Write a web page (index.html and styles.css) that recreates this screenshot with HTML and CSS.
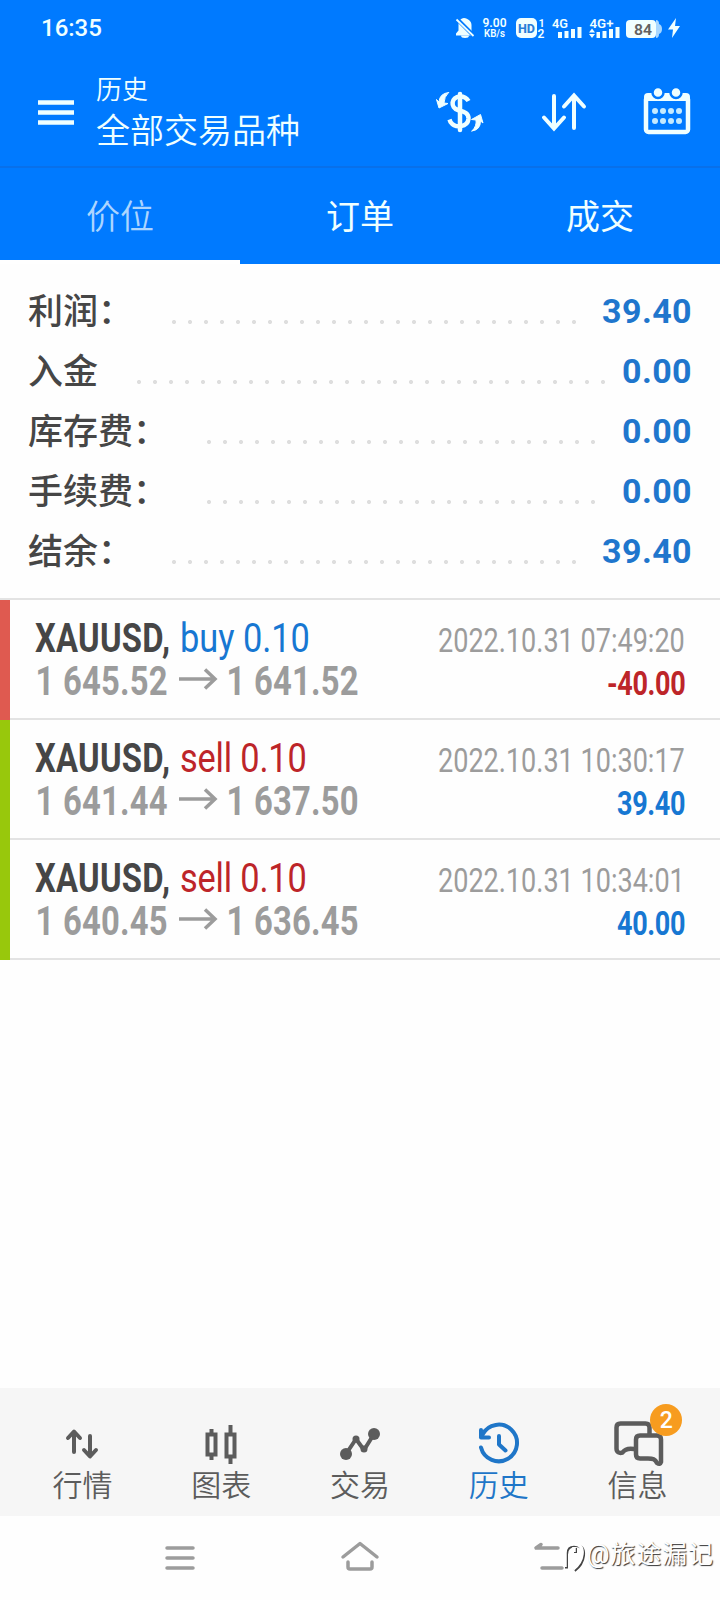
FILE: index.html
```html
<!DOCTYPE html>
<html lang="zh-CN">
<head>
<meta charset="utf-8">
<title>历史</title>
<link rel="stylesheet" href="styles.css">
</head>
<body>
<div class="app">
  <header class="header">
    <div class="statusbar">
      <span class="clock">16:35</span>
      <svg class="status-icons" width="236" height="30" viewBox="452 12 236 30">
        <g fill="#f0ffff">
          <path d="M456 35.500v-2l2.500-3v-6c0-3.500 2-6 5.500-6.500 4 .5 7.500 3 7.500 7v6l1.500 3v1.500z"/>
          <path d="M461 35.500h8a4 2.500 0 0 1-8 0z"/>
          <path d="M456 18l18 18" stroke="#007aff" stroke-width="4"/>
          <path d="M456.500 19.500l17 16.500" stroke="#f0ffff" stroke-width="1.800"/>
          <rect x="516" y="18" width="21" height="20" rx="5"/>
          <path d="M558 32h4v6h-4zM564.500 31h4v7h-4zM571 29h4v9h-4zM577.500 27h4v11h-4z"/>
          <path d="M589 32.500l3-4 3 4zM589 34l3 4 3-4zM596.500 32h3.500v6h-3.500zM602.500 31h4v7h-4zM609 29h4v9h-4zM615.500 27h4v11h-4z"/>
          <rect x="626" y="20" width="30" height="18" rx="4"/>
          <path d="M656 20q3 0 3 4 3 1 3 5t-3 5q0 4-3 4z" opacity=".7"/>
          <path d="M676 18l-8 11.500h5l-1 8.500 8-12h-5z"/>
        </g>
        <g font-family="Roboto, sans-serif" font-weight="600" fill="#f0ffff">
          <text x="482.500" y="27" font-size="12" textLength="24" lengthAdjust="spacingAndGlyphs">9.00</text>
          <text x="484" y="37" font-size="10" textLength="21" lengthAdjust="spacingAndGlyphs">KB/s</text>
          <text x="518" y="33" font-size="13" textLength="17" lengthAdjust="spacingAndGlyphs" fill="#2a7fd8" font-weight="800">HD</text>
          <text x="538.500" y="26.500" font-size="11">1</text>
          <text x="537.500" y="38" font-size="12">2</text>
          <text x="552" y="27.500" font-size="13" textLength="16" lengthAdjust="spacingAndGlyphs">4G</text>
          <text x="589.500" y="27.500" font-size="13" textLength="24" lengthAdjust="spacingAndGlyphs">4G+</text>
          <text x="634" y="34.500" font-size="15.500" textLength="18" lengthAdjust="spacingAndGlyphs" fill="#626262">84</text>
        </g>
      </svg>
    </div>
    <div class="toolbar">
      <svg class="menu" width="36" height="26" viewBox="0 0 36 26"><path d="M0 2.500h36M0 12.500h36M0 22.500h36" stroke="#f0ffff" stroke-width="4.500"/></svg>
      <div class="titles">
        <div class="subtitle">历史</div>
        <div class="title">全部交易品种</div>
      </div>
      <svg class="tools" width="260" height="54" viewBox="432 84 260 54" fill="none" stroke="#f0ffff" stroke-linecap="round">
        <path d="M468.500 101c-2-3.500-5-4.500-8.500-4.500-9 .5-10 11-2 13.500 5 1.500 11 2.500 10.500 9-1 8-13 10-18 3l-1-2.500" stroke-width="4.500" stroke-linecap="butt"/>
        <path d="M460 94v36" stroke-width="4.500"/>
        <path d="M448.500 92.500q-9 1-9.500 9.500l-2.500-2.500 2.500 8.500 9-4.500-4-.5q0-6 4.500-10.500z" fill="#f0ffff" stroke-width="1"/>
        <path d="M472 131q8.500-1 8.500-10l2.500 2-2.500-8.500-9 5 4.500.5q1 6-4 11z" fill="#f0ffff" stroke-width="1"/>
        <path d="M554 96v32M544 117.500l10 11 10-11M574 128V96M564 106.500l10-11 10 11" stroke-width="4"/>
        <rect x="646" y="97" width="42" height="35" rx="2.500" stroke-width="4.500"/>
        <path d="M648 97h38" stroke-width="8"/>
        <g fill="#f0ffff" stroke="#007aff" stroke-width="2.500"><circle cx="658" cy="92.500" r="5.500"/><circle cx="676" cy="92.500" r="5.500"/></g>
        <path d="M655 111h.01M663 111h.01M671 111h.01M679 111h.01M655 121h.01M663 121h.01M671 121h.01M679 121h.01" stroke="#c4eaff" stroke-width="6"/>
      </svg>
    </div>
    <nav class="tabs">
      <div class="tab active">价位</div>
      <div class="tab">订单</div>
      <div class="tab">成交</div>
    </nav>
  </header>
  <main class="content">
    <section class="summary">
      <div class="line"><span class="label">利润：</span><i class="dots" style="width:416px"></i><b class="value total">39.40</b></div>
      <div class="line"><span class="label">入金</span><i class="dots" style="width:480px"></i><b class="value deposit">0.00</b></div>
      <div class="line"><span class="label">库存费：</span><i class="dots" style="width:400px"></i><b class="value">0.00</b></div>
      <div class="line"><span class="label">手续费：</span><i class="dots" style="width:400px"></i><b class="value">0.00</b></div>
      <div class="line"><span class="label">结余：</span><i class="dots" style="width:416px"></i><b class="value total">39.40</b></div>
    </section>
    <section class="deals">
      <svg class="deal" width="720" height="120" viewBox="0 0 720 120">
        <path class="rule" d="M10 119h710"/>
        <rect class="loss" width="10" height="120"/>
        <text class="symbol" transform="translate(35 52) scale(.82 1)" textLength="164.6">XAUUSD,</text>
        <text class="side blue" transform="translate(180 52) scale(.86 1)" textLength="151">buy 0.10</text>
        <text class="price" transform="translate(35.500 95) scale(.82 1)" textLength="161">1 645.52</text>
        <path class="arrow" d="M179 79h36M205 69.500l10 9.500-10 9.500"/>
        <text class="price" transform="translate(226.500 95) scale(.82 1)" textLength="161">1 641.52</text>
        <text class="time" transform="translate(438 52) scale(.82 1)" textLength="301">2022.10.31 07:49:20</text>
        <text class="profit red" transform="translate(607 95) scale(.82 1)" textLength="96">-40.00</text>
      </svg>
      <svg class="deal" width="720" height="120" viewBox="0 0 720 120">
        <path class="rule" d="M10 119h710"/>
        <rect class="gain" width="10" height="120"/>
        <text class="symbol" transform="translate(35 52) scale(.82 1)" textLength="164.6">XAUUSD,</text>
        <text class="side red" transform="translate(180 52) scale(.86 1)" textLength="147.500">sell 0.10</text>
        <text class="price" transform="translate(35.500 95) scale(.82 1)" textLength="161">1 641.44</text>
        <path class="arrow" d="M179 79h36M205 69.500l10 9.500-10 9.500"/>
        <text class="price" transform="translate(226.500 95) scale(.82 1)" textLength="161">1 637.50</text>
        <text class="time" transform="translate(438 52) scale(.82 1)" textLength="301">2022.10.31 10:30:17</text>
        <text class="profit blue" transform="translate(617 95) scale(.82 1)" textLength="83.500">39.40</text>
      </svg>
      <svg class="deal" width="720" height="120" viewBox="0 0 720 120">
        <path class="rule" d="M10 119h710"/>
        <rect class="gain" width="10" height="120"/>
        <text class="symbol" transform="translate(35 52) scale(.82 1)" textLength="164.6">XAUUSD,</text>
        <text class="side red" transform="translate(180 52) scale(.86 1)" textLength="147.500">sell 0.10</text>
        <text class="price" transform="translate(35.500 95) scale(.82 1)" textLength="161">1 640.45</text>
        <path class="arrow" d="M179 79h36M205 69.500l10 9.500-10 9.500"/>
        <text class="price" transform="translate(226.500 95) scale(.82 1)" textLength="161">1 636.45</text>
        <text class="time" transform="translate(438 52) scale(.82 1)" textLength="301">2022.10.31 10:34:01</text>
        <text class="profit blue" transform="translate(617 95) scale(.82 1)" textLength="83.500">40.00</text>
      </svg>
    </section>
  </main>
  <nav class="bottom-nav">
    <div class="item">
      <svg width="60" height="60" viewBox="52 1415 60 60"><path d="M74 1452v-20M68 1438l6-6.500 6 6.500M90 1436v20M84 1450l6 6.500 6-6.500" class="ico" stroke-width="4"/></svg>
      <span>行情</span>
    </div>
    <div class="item">
      <svg width="60" height="60" viewBox="191 1415 60 60"><path d="M207.500 1434.500h8v20h-8zM226.500 1434.500h8v22h-8z" class="ico miter" stroke-width="4"/><path d="M211.500 1429v4M211.500 1456v4M230.500 1425v8M230.500 1457v7" class="ico butt" stroke-width="4"/></svg>
      <span>图表</span>
    </div>
    <div class="item">
      <svg width="60" height="60" viewBox="330 1415 60 60"><path d="M346 1454l10-15 8 11 10-16" class="ico" stroke-width="4"/><g fill="#5c5c5c"><circle cx="346" cy="1454" r="6"/><circle cx="356" cy="1439" r="3.500"/><circle cx="364" cy="1449" r="3.500"/><circle cx="374" cy="1434" r="6"/></g></svg>
      <span>交易</span>
    </div>
    <div class="item current">
      <svg width="60" height="60" viewBox="469 1415 60 60"><path d="M481 1447.500a18.300 18.300 0 1 0 1.500-13l-1.500 2.500M481 1430v7.500h8M499 1436v8.500l6.500 6" class="ico" stroke-width="4"/></svg>
      <span>历史</span>
    </div>
    <div class="item">
      <svg width="60" height="60" viewBox="608 1415 60 60"><path d="M634 1449c-6-1-9 0-11.500 3.500-3 1-6 0-6-4v-21q0-4 4-4h25q4 0 4 4v7" class="ico" stroke-width="4.500"/><path d="M640 1435.500h17q4 0 4 4V1462q-1 3-4 1c-2-4-4-4.500-9-4.500h-8q-4 0-4-4v-15q0-4 4-4z" class="ico" stroke-width="4.500"/></svg>
      <b class="badge">2</b>
      <span>信息</span>
    </div>
  </nav>
  <div class="system-nav">
    <svg width="30" height="26" viewBox="0 0 30 26"><path d="M2 3h26M2 13h26M2 23h26" class="sys"/></svg>
    <svg width="40" height="32" viewBox="340 1540 40 32"><path d="M343 1556l17-13.500 17 13.500M348 1561v5q0 2 2 2h20q2 0 2-2v-5" class="sys"/></svg>
    <svg width="40" height="32" viewBox="530 1540 40 32"><path d="M558 1548h-21l4-3.500-5 3.500M542 1568h20" class="sys"/></svg>
    <svg class="mark" width="170" height="50" viewBox="550 1530 170 50">
      <path d="M566.500 1568.500v-14q0-9 9-9t8 10q-1 9-9 15M575.500 1548v5" class="mark-shade"/>
      <path d="M565 1567v-14q0-9 9-9t8 10q-1 9-9 15M574 1547v5" class="mark-line"/>
      <text x="587" y="1563" textLength="126">@旅途漏记</text>
    </svg>
  </div>
</div>
</body>
</html>
```
FILE: styles.css
```css
* { box-sizing: border-box; }
body { margin: 0; font-family: Roboto, "Noto Sans CJK SC", sans-serif; background: #fefefe; }
svg { display: block; }
.app { width: 720px; height: 1600px; display: flex; flex-direction: column; overflow: hidden; }
.header { background: #007aff; color: #f0ffff; height: 264px; display: flex; flex-direction: column; }
.statusbar { height: 56px; display: flex; justify-content: space-between; padding: 12px 32px 0 41px; }
.clock { font-size: 24px; line-height: 32px; font-weight: 500; }
.toolbar { height: 112px; display: flex; padding: 0 28px 0 38px; border-bottom: 2px solid #0870ea; }
.menu { margin-top: 44px; flex: none; }
.titles { width: 320px; padding: 16px 0 0 22px; flex: none; }
.subtitle { font-size: 26px; line-height: 36px; font-weight: 350; }
.title { font-size: 34px; line-height: 46px; white-space: nowrap; font-weight: 350; }
.tools { margin: 28px 0 0 38px; flex: none; }
.tabs { flex: 1; display: grid; grid-template-columns: repeat(3, 1fr); }
.tab { text-align: center; font-size: 34px; line-height: 98px; height: 96px; }
.tab.active { color: #acd5ff; border-bottom: 4px solid #fff; font-weight: 350; }
.content { flex: 1; }
.summary { height: 336px; padding: 17px 28px 0; border-bottom: 2px solid #e3e3e3; }
.line { height: 60px; display: flex; align-items: center; }
.label { font-size: 35px; line-height: 60px; font-weight: 500; color: #464646; white-space: nowrap; padding-top: 3px; }
.dots { margin-left: auto; flex: none; height: 4px; margin-top: 21px; background: radial-gradient(circle at 2px 2px, #dedede 1.800px, transparent 2.300px) left top / 16px 4px; }
.value { flex: none; width: 85px; text-align: right; font-size: 34px; line-height: 60px; color: #1f76cd; letter-spacing: .4px; }
.value.total { width: 104px; }
.value.deposit { width: 75px; }
.rule { stroke: #e3e3e3; stroke-width: 2; }
.loss { fill: #df5a50; }
.gain { fill: #98c80c; }
.symbol { font-size: 40px; font-weight: 700; fill: #464646; }
.side { font-size: 40px; }
.price { font-size: 40px; font-weight: 700; fill: #9c9c9c; }
.time { font-size: 33px; fill: #9c9c9c; }
.profit { font-size: 33px; font-weight: 700; }
.blue { fill: #1777d2; }
.red { fill: #bd2529; }
.arrow { stroke: #9c9c9c; stroke-width: 3.500; fill: none; }
.bottom-nav { height: 128px; background: #f6f6f6; display: grid; grid-template-columns: repeat(5, 138.800px); padding-left: 13px; color: #5c5c5c; }
.item { display: flex; flex-direction: column; align-items: center; position: relative; padding-top: 27px; }
.item span { font-size: 30px; line-height: 40px; margin-top: -9px; font-weight: 350; }
.ico { fill: none; stroke: #5c5c5c; stroke-linecap: round; stroke-linejoin: round; }
.butt { stroke-linecap: butt; }
.miter { stroke-linejoin: miter; }
.current { color: #1f76c8; }
.current .ico { stroke: #1f76c8; }
.badge { position: absolute; left: 82px; top: 16px; width: 32px; height: 32px; border-radius: 50%; background: #f79c1f; color: #fff; font-size: 23px; line-height: 33px; text-align: center; font-weight: 500; }
.system-nav { height: 84px; display: flex; padding-left: 165px; position: relative; align-items: flex-start; }
.system-nav > svg:nth-child(1) { margin-top: 29px; }
.system-nav > svg:nth-child(2) { margin: 25px 0 0 145px; }
.system-nav > svg:nth-child(3) { margin: 24px 0 0 150px; }
.sys { fill: none; stroke: #9c9c9c; stroke-width: 3.500; stroke-linecap: round; stroke-linejoin: round; }
.system-nav .mark { position: absolute; left: 550px; top: 14px; }
.mark-shade { fill: none; stroke: #444; stroke-width: 3; }
.mark-line { fill: none; stroke: #fff; stroke-width: 3.500; }
.mark text { font-size: 25px; fill: #fff; text-shadow: 1px 1px 1px #333; }
```
